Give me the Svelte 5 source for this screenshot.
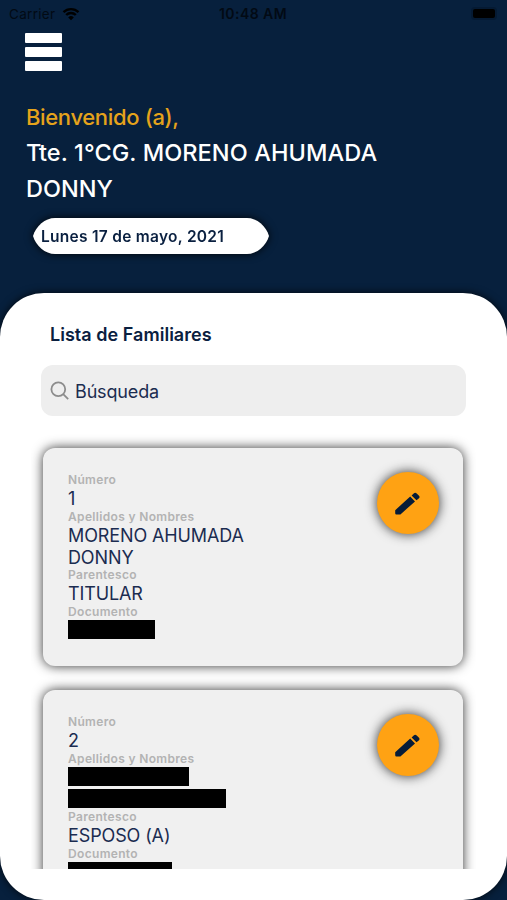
<script lang="ts">
	type Line = { text?: string; bar?: number };
	type Field = { label: string; lines: Line[] };

	let search = '';

	const familiares: Field[][] = [
		[
			{ label: 'Número', lines: [{ text: '1' }] },
			{ label: 'Apellidos y Nombres', lines: [{ text: 'MORENO AHUMADA' }, { text: 'DONNY' }] },
			{ label: 'Parentesco', lines: [{ text: 'TITULAR' }] },
			{ label: 'Documento', lines: [{ bar: 87 }] }
		],
		[
			{ label: 'Número', lines: [{ text: '2' }] },
			{ label: 'Apellidos y Nombres', lines: [{ bar: 121 }, { bar: 158 }] },
			{ label: 'Parentesco', lines: [{ text: 'ESPOSO (A)' }] },
			{ label: 'Documento', lines: [{ bar: 104 }] }
		]
	];
</script>

<div class="screen">
	<div class="status">
		<div class="carrier">
			<span>Carrier</span>
			<svg width="18" height="14" viewBox="0 0 18 14" aria-hidden="true">
				<path d="M1.5 5.2a10.6 10.6 0 0 1 15 0M4.2 8a6.8 6.8 0 0 1 9.6 0" />
				<path class="dot" d="M9 13.2 6.2 10.4a4 4 0 0 1 5.6 0z" />
			</svg>
		</div>
		<span class="time">10:48 AM</span>
		<div class="battery"></div>
	</div>

	<header>
		<button class="menu" type="button" aria-label="Menú">
			<i></i><i></i><i></i>
		</button>
		<p class="welcome">Bienvenido (a),</p>
		<h1><span class="rank">Tte. 1°CG. MORENO AHUMADA</span><br />DONNY</h1>
		<div class="date-shadow">
			<div class="date"><span>Lunes 17 de mayo, 2021</span></div>
		</div>
	</header>

	<main>
		<h2>Lista de Familiares</h2>
		<label class="search">
			<svg width="20" height="20" viewBox="0 0 20 20" aria-hidden="true">
				<circle cx="8.3" cy="8.3" r="6.9" />
				<path d="m13.2 13.2 5 5" />
			</svg>
			<input type="text" placeholder="Búsqueda" bind:value={search} />
		</label>

		<div class="list">
			{#each familiares as fields}
				<article class="card">
					<dl>
						{#each fields as field}
							<dt>{field.label}</dt>
							{#each field.lines as line}
								<dd>
									{#if line.bar}
										<span class="bar" style="width: {line.bar}px"></span>
									{:else}
										{line.text}
									{/if}
								</dd>
							{/each}
						{/each}
					</dl>
					<button class="edit" type="button" aria-label="Editar">
						<svg width="46" height="46" viewBox="0 0 46 46" aria-hidden="true">
							<path
								d="M10.2 30.2 25.2 16.6 30 21.4 15.4 34.4H11.4Q10.2 34.4 10.2 33.2ZM26.6 15.4 28.7 13.4Q30.2 12.1 31.7 13.4L34 15.7Q35.2 17 34 18.2L31.5 20.3Z"
							/>
						</svg>
					</button>
				</article>
			{/each}
		</div>
	</main>
</div>

<style>
	:global(body) {
		margin: 0;
		background: #07203d;
	}

	.screen {
		width: 507px;
		height: 900px;
		overflow: hidden;
		display: flex;
		flex-direction: column;
		background: #07203d;
		color: #0a2040;
		font-family: Inter, sans-serif;
	}

	button {
		padding: 0;
		border: none;
		background: none;
	}

	.status {
		height: 27px;
		flex: none;
		box-sizing: border-box;
		padding: 0 10px 0 9px;
		display: grid;
		grid-template-columns: 1fr auto 1fr;
		align-items: center;
		color: #020a14;
		font-size: 13.5px;
	}

	.carrier {
		display: flex;
		align-items: center;
		gap: 7px;
		letter-spacing: 0.3px;
	}

	.carrier svg {
		fill: none;
		stroke: #000;
		stroke-width: 2.4;
	}

	.carrier .dot {
		fill: #000;
		stroke: none;
	}

	.time {
		font-weight: 600;
		font-size: 14px;
		letter-spacing: 0.45px;
	}

	.battery {
		justify-self: end;
		width: 22px;
		height: 9px;
		margin-right: 2px;
		border-radius: 2px;
		background: #000;
		box-shadow: 0 0 0 2px #051a33;
	}

	header {
		height: 266px;
		flex: none;
		box-sizing: border-box;
		padding: 6px 25px 0;
	}

	.menu {
		display: flex;
		flex-direction: column;
		gap: 4px;
		width: 37px;
	}

	.menu i {
		height: 10px;
		border-radius: 1px;
		background: #fff;
	}

	.welcome {
		margin: 28px 0 0 1px;
		color: #e5a31b;
		font-size: 22px;
		font-weight: 500;
		line-height: 36px;
		letter-spacing: -0.35px;
	}

	h1 {
		margin: 0 0 0 1px;
		color: #fff;
		font-size: 23.5px;
		font-weight: 500;
		line-height: 36px;
		white-space: nowrap;
	}

	.rank {
		letter-spacing: 0.08px;
	}

	.date-shadow {
		width: 236px;
		margin: 11px 0 0 8px;
		filter: drop-shadow(0 0 4px rgba(0, 0, 0, 0.9));
	}

	.date {
		height: 36px;
		box-sizing: border-box;
		padding-left: 8px;
		display: flex;
		align-items: center;
		background: #fff;
		clip-path: path('M0 18C3 8 12 0 22 0H214C224 0 233 8 236 18C233 28 224 36 214 36H22C12 36 3 28 0 18Z');
		font-size: 15.5px;
		font-weight: 600;
		letter-spacing: 0.28px;
	}

	main {
		height: 607px;
		flex: none;
		box-sizing: border-box;
		padding-top: 31px;
		display: flex;
		flex-direction: column;
		border-radius: 44px;
		background: #fff;
		box-shadow: 0 0 8px rgba(0, 0, 0, 0.8);
	}

	h2 {
		margin: 0 0 0 50px;
		font-size: 18px;
		font-weight: 600;
		line-height: 22px;
		letter-spacing: 0.03px;
	}

	.search {
		height: 51px;
		flex: none;
		box-sizing: border-box;
		margin: 19px 41px 0;
		padding: 1px 9px 0;
		display: flex;
		align-items: center;
		gap: 5px;
		border-radius: 12px;
		background: #eee;
	}

	.search svg {
		fill: none;
		stroke: #8c8c8c;
		stroke-width: 1.8;
	}

	.search input {
		flex: 1;
		min-width: 0;
		padding: 0;
		border: none;
		outline: none;
		background: none;
		color: #1b2c50;
		font: 400 18px Inter, sans-serif;
		letter-spacing: -0.15px;
	}

	.search input::placeholder {
		color: #1b2c50;
		opacity: 1;
	}

	.list {
		height: 453px;
		box-sizing: border-box;
		margin: 0 31px;
		padding: 32px 13px 0 12px;
		overflow: hidden;
	}

	.card {
		height: 218px;
		box-sizing: border-box;
		margin-bottom: 24px;
		padding: 24px 24px 0 25px;
		display: flex;
		justify-content: space-between;
		align-items: flex-start;
		border-radius: 12px;
		background: #f0f0f0;
		box-shadow: 0 0 12px rgba(0, 0, 0, 0.8);
	}

	dl {
		margin: 0;
	}

	dt {
		height: 15px;
		color: #b3b3b3;
		font-size: 12px;
		font-weight: 600;
		line-height: 16px;
		letter-spacing: 0.33px;
	}

	dd {
		height: 21.7px;
		margin: 0;
		color: #1b2c50;
		font-size: 18px;
		line-height: 24px;
		letter-spacing: -0.12px;
		white-space: nowrap;
	}

	dd + dd {
		line-height: 25px;
	}

	.bar {
		display: block;
		height: 19px;
		border-top: 0.8px solid transparent;
		background: #000 padding-box;
	}

	dd + dd .bar {
		border-top-width: 2px;
	}

	.edit {
		width: 62px;
		height: 62px;
		display: grid;
		place-items: center;
		border-radius: 50%;
		background: #ffa213;
		box-shadow: 0 0 12px rgba(0, 0, 0, 0.8);
	}

	.edit svg {
		fill: #071c38;
	}
</style>
